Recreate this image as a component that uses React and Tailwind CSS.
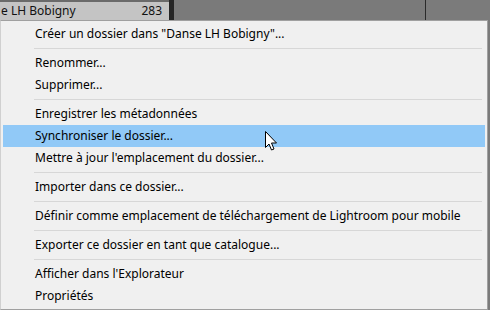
import React from "react";

const Sep = () => (
  <div className="h-[7px] flex items-center pl-[31px] pr-[3px]">
    <div className="h-px w-full bg-[#d7d7d7]" />
  </div>
);

const Item = ({ children, active }) => (
  <div
    className={
      "h-[22px] flex items-center pl-[32px] text-[12px] text-[#000] " +
      (active ? "bg-[#91c9f7]" : "")
    }
  >
    {children}
  </div>
);

export default function App() {
  return (
    <div
      className="w-[490px] h-[310px] bg-[#7a7a7a] overflow-hidden relative flex flex-col"
      style={{ fontFamily: '"Noto Sans", "Open Sans", sans-serif' }}
    >
      <div className="h-[20px] flex shrink-0">
        <div className="w-[169px] flex flex-col">
          <div className="h-[3px] bg-[#6a6a6a]" />
          <div className="flex-1 bg-[#c4c4c4] flex items-center justify-between pr-[7px] pl-[1px] text-[12px] text-[#111]">
            <span>e LH Bobigny</span>
            <span>283</span>
          </div>
        </div>
        <div className="w-[5px] bg-[#262626]" />
        <div className="w-[251px] bg-[#7a7a7a]" />
        <div className="w-px bg-[#2a2a2a]" />
        <div className="flex-1 bg-[#7b7b7b]" />
      </div>
      <div className="w-[488px] bg-[#f0f0f0] border border-[#a0a0a0] border-l-[#d0d0d0] py-[2px] pl-[2px] pr-[2px] flex flex-col">
        <Item>Créer un dossier dans "Danse LH Bobigny"...</Item>
        <Sep />
        <Item>Renommer...</Item>
        <Item>Supprimer...</Item>
        <Sep />
        <Item>Enregistrer les métadonnées</Item>
        <Item active>Synchroniser le dossier...</Item>
        <Item>Mettre à jour l'emplacement du dossier...</Item>
        <Sep />
        <Item>Importer dans ce dossier...</Item>
        <Sep />
        <Item>Définir comme emplacement de téléchargement de Lightroom pour mobile</Item>
        <Sep />
        <Item>Exporter ce dossier en tant que catalogue...</Item>
        <Sep />
        <Item>Afficher dans l'Explorateur</Item>
        <Item>Propriétés</Item>
      </div>
      <svg
        className="absolute left-[264px] top-[130px]"
        width="14"
        height="22"
        viewBox="0 0 14 22"
      >
        <path
          d="M1.5 1.5 L1.5 17.5 L5 14 L7.5 20 L10 19 L7.5 13 L12.5 13 Z"
          fill="#fff"
          stroke="#000"
          strokeWidth="1"
          strokeLinejoin="miter"
        />
      </svg>
    </div>
  );
}
